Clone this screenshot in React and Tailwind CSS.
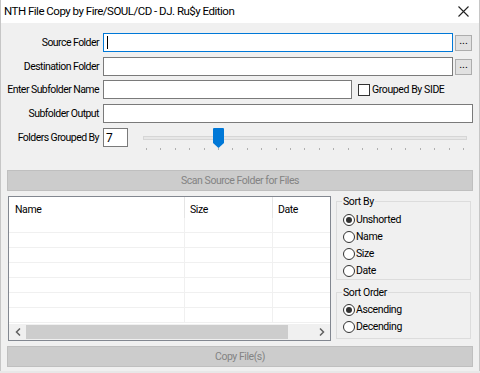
import React from "react";

const F = { fontFamily: "Roboto, 'Liberation Sans', sans-serif" };

function Radio({ checked, label }) {
  return (
    <div className="flex h-[17px] items-center">
      <div className="flex h-[12px] w-[12px] shrink-0 items-center justify-center rounded-full border border-[#333333] bg-white">
        {checked && <div className="h-[6px] w-[6px] rounded-full bg-[#333333]" />}
      </div>
      <span className="ml-[1px] whitespace-nowrap text-[10.5px] tracking-[-0.4px] text-black">{label}</span>
    </div>
  );
}

function Label({ children }) {
  return (
    <div className="w-[98px] shrink-0 whitespace-nowrap text-right text-[10.5px] tracking-[-0.55px] text-black">{children}</div>
  );
}

const ticks = Array.from({ length: 23 }, (_, i) => i);
const rows = Array.from({ length: 7 }, (_, i) => i);

export default function App() {
  return (
    <div style={F} className="relative h-[373px] w-[480px] overflow-hidden bg-[#f0f0f0]">
      <div className="flex h-[371px] flex-col border-x border-[#c6c6c6]">
        {/* Title bar */}
        <div className="flex h-[23px] shrink-0 items-center justify-between bg-white pl-[3px] pr-[10px]">
          <span className="whitespace-nowrap text-[11.5px] tracking-[-0.5px] text-black">NTH File Copy by Fire/SOUL/CD - DJ. Ru$y Edition</span>
          <svg width="11" height="11" viewBox="0 0 11 11">
            <path d="M0.5 0.5 L10.5 10.5 M10.5 0.5 L0.5 10.5" stroke="#222" strokeWidth="1.1" />
          </svg>
        </div>

        {/* Form rows */}
        <div className="mt-[10px] flex h-[19px] items-center">
          <Label>Source Folder</Label>
          <div className="ml-[4px] flex h-[19px] w-[350px] items-center border border-[#0078d7] bg-white pl-[3px]">
            <div className="h-[13px] w-[1px] bg-black" />
          </div>
          <div className="ml-[2px] flex h-[16px] w-[17px] items-center justify-center border border-[#adadad] bg-[#e1e1e1] pb-[4px] text-[11px] leading-none text-black">...</div>
        </div>

        <div className="mt-[5px] flex h-[19px] items-center">
          <Label>Destination Folder</Label>
          <div className="ml-[4px] h-[19px] w-[350px] border border-[#7a7a7a] bg-white" />
          <div className="ml-[2px] flex h-[16px] w-[17px] items-center justify-center border border-[#adadad] bg-[#e1e1e1] pb-[4px] text-[11px] leading-none text-black">...</div>
        </div>

        <div className="mt-[4px] flex h-[19px] items-center">
          <Label>Enter Subfolder Name</Label>
          <div className="ml-[4px] h-[19px] w-[249px] border border-[#7a7a7a] bg-white" />
          <div className="ml-[6px] h-[12px] w-[12px] border border-[#333333] bg-white" />
          <span className="ml-[2px] whitespace-nowrap text-[10.5px] tracking-[-0.4px] text-black">Grouped By SIDE</span>
        </div>

        <div className="mt-[5px] flex h-[19px] items-center">
          <Label>Subfolder Output</Label>
          <div className="ml-[4px] h-[19px] w-[370px] border border-[#7a7a7a] bg-white" />
        </div>

        <div className="mt-[5px] flex h-[19px] items-start">
          <div className="flex h-[19px] items-center">
            <Label>Folders Grouped By</Label>
          </div>
          <div className="ml-[4px] flex h-[19px] w-[25px] items-center border border-[#7a7a7a] bg-white pl-[2px] text-[12px] text-black">7</div>
          <div className="ml-[15px] flex w-[324px] flex-col">
            <div className="relative h-[20px]">
              <div className="mt-[8px] h-[4px] w-[324px] border border-[#d6d6d6] bg-[#e7e7e7]" />
              <svg className="absolute left-[70px] top-[0px]" width="11" height="21" viewBox="0 0 11 21">
                <path d="M0 1 Q0 0 1 0 H10 Q11 0 11 1 V15 L5.5 20 L0 15 Z" fill="#0078d7" />
              </svg>
            </div>
            <div className="flex w-[324px] justify-between px-[3px]">
              {ticks.map((i) => (
                <div key={i} className="h-[2px] w-[1px] bg-[#b0b0b0]" />
              ))}
            </div>
          </div>
        </div>

        {/* Scan button */}
        <div className="mx-[6px] mt-[23px] flex h-[21px] items-center justify-center border border-[#bfbfbf] bg-[#cccccc] text-[10.5px] tracking-[-0.45px] text-[#838383]">
          Scan Source Folder for Files
        </div>

        {/* Middle section */}
        <div className="mt-[5px] flex">
          <div className="ml-[7px] flex h-[145px] w-[323px] flex-col border border-[#828790] bg-white">
            <div className="flex h-[21px] text-[10.5px] tracking-[-0.4px] text-black">
              <div className="w-[176px] border-r border-[#e5e5e5] pl-[6px] pt-[5px]">Name</div>
              <div className="w-[88px] border-r border-[#e5e5e5] pl-[5px] pt-[5px]">Size</div>
              <div className="flex-1 pl-[5px] pt-[5px]">Date</div>
            </div>
            {rows.map((r) => (
              <div key={r} className="flex h-[15px] border-b border-[#f0f0f0]">
                <div className="w-[176px] border-r border-[#f0f0f0]" />
                <div className="w-[88px] border-r border-[#f0f0f0]" />
                <div className="flex-1" />
              </div>
            ))}
            <div className="mt-auto flex h-[16px] items-center bg-[#f0f0f0]">
              <div className="flex w-[17px] items-center justify-center">
                <svg width="6" height="8" viewBox="0 0 6 8"><path d="M5 0.5 L1.5 4 L5 7.5" stroke="#606060" strokeWidth="1.5" fill="none" /></svg>
              </div>
              <div className="h-[14px] w-[262px] bg-[#cdcdcd]" />
              <div className="flex-1" />
              <div className="flex w-[17px] items-center justify-center">
                <svg width="6" height="8" viewBox="0 0 6 8"><path d="M1 0.5 L4.5 4 L1 7.5" stroke="#606060" strokeWidth="1.5" fill="none" /></svg>
              </div>
            </div>
          </div>

          <div className="ml-[5px] flex w-[135px] flex-col">
            <div className="relative mt-[5px] h-[79px] border border-[#dcdcdc] pl-[6px] pt-[9px]">
              <span className="absolute left-[5px] top-[-6px] bg-[#f0f0f0] px-[1px] text-[10.5px] leading-[12px] tracking-[-0.4px] text-black">Sort By</span>
              <Radio checked label="Unshorted" />
              <Radio label="Name" />
              <Radio label="Size" />
              <Radio label="Date" />
            </div>
            <div className="relative mt-[12px] h-[47px] border border-[#dcdcdc] pl-[6px] pt-[8px]">
              <span className="absolute left-[5px] top-[-6px] bg-[#f0f0f0] px-[1px] text-[10.5px] leading-[12px] tracking-[-0.4px] text-black">Sort Order</span>
              <Radio checked label="Ascending" />
              <Radio label="Decending" />
            </div>
          </div>
        </div>

        {/* Copy button */}
        <div className="mx-[6px] mt-[5px] flex h-[21px] items-center justify-center border border-[#bfbfbf] bg-[#cccccc] text-[10.5px] tracking-[-0.45px] text-[#838383]">
          Copy File(s)
        </div>
      </div>
      <div className="h-[2px] bg-[#e8e8e8]" />
    </div>
  );
}
